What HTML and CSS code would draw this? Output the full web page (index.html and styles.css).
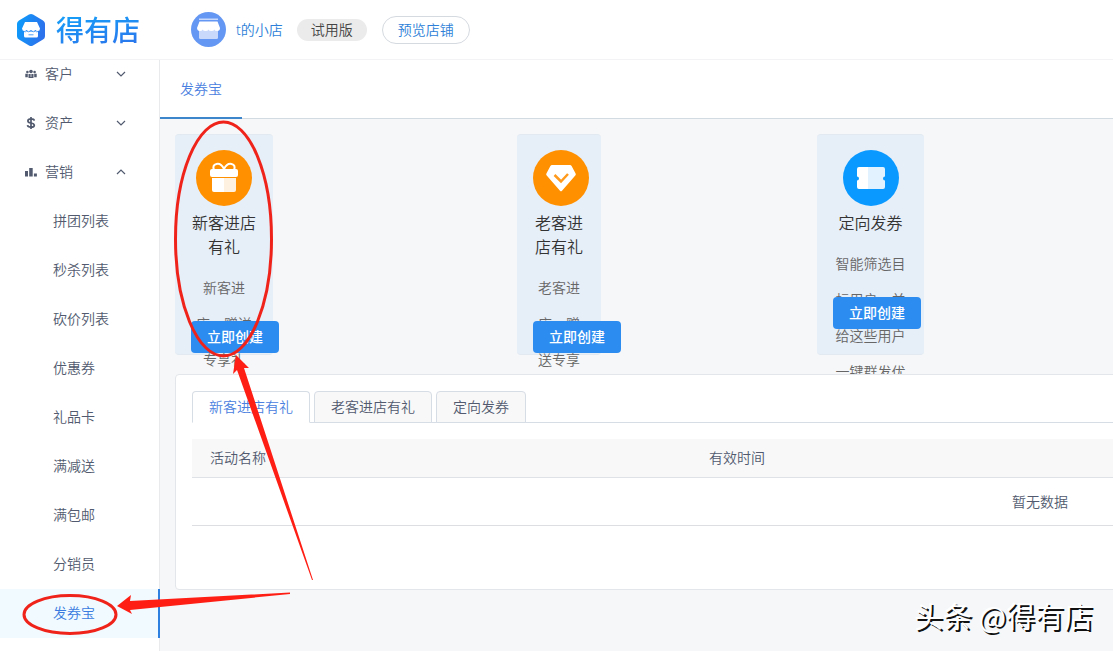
FILE: index.html
```html
<!DOCTYPE html>
<html lang="zh-CN">
<head>
  <meta charset="UTF-8">
  <title>发券宝 - 得有店</title>
  <meta name="viewport" content="width=device-width, initial-scale=1.0">
  <link rel="stylesheet" href="styles.css">
</head>
<body>
  <header class="header">
    <a class="brand" href="#">
      <svg width="30" height="34" viewBox="0 0 30 34">
        <defs>
          <linearGradient id="hex" x1="0" y1="0" x2="1" y2="0.3">
            <stop offset="0" stop-color="#0a9ffb"/>
            <stop offset="1" stop-color="#2c72ec"/>
          </linearGradient>
        </defs>
        <path d="M13 1.600q2-1.200 4 0l10 5.800q2 1.200 2 3.400v12.400q0 2.200-2 3.400l-10 5.800q-2 1.200-4 0l-10-5.800q-2-1.200-2-3.400V10.800q0-2.200 2-3.400z" fill="url(#hex)"/>
        <path d="M9 9h12l3 6.500q0 2.500-2.200 2.500t-2.300-1q-.6 1-2.300 1T15 17q-.6 1-2.300 1t-2.200-1Q10 18 8.200 18T6 15.500z" fill="#fff"/>
        <path d="M8 18h14v5q0 1.500-1.500 1.500h-11Q8 24.500 8 23z" fill="#fff"/>
        <path d="M8 18.500q1.500.8 2.500-.4 2 1.300 4.500 0 2.500 1.300 4.500 0 1 1.200 2.500.4M12.500 21.800h5" stroke="#2388f4" stroke-width=".8" fill="none"/>
      </svg>
      <span class="brand-name">得有店</span>
    </a>
    <div class="shop">
      <svg width="35" height="35" viewBox="0 0 35 35">
        <circle cx="17.500" cy="17.500" r="17.500" fill="#6497f3"/>
        <path d="M8 18h19v7.500q0 1.500-1.500 1.500h-16Q8 27 8 25.500z" fill="#c9d9fb"/>
        <path d="M8 6.500h19V8H8z" fill="#c9d9fb"/>
        <path d="M8.500 9.500h18l2.500 6.500q0 3-2.700 3t-3-1.200q-.6 1.200-2.900 1.200t-2.900-1.200q-.6 1.200-2.900 1.200t-2.900-1.200q-.6 1.200-3 1.200T6 16z" fill="#fff"/>
      </svg>
      <a class="shop-name" href="#">t的小店</a>
      <span class="badge">试用版</span>
      <button class="preview">预览店铺</button>
    </div>
  </header>

  <div class="layout">
    <nav class="sidebar">
      <div class="menu">
        <a class="group" href="#">
          <svg width="12" height="12" viewBox="0 0 12 12" fill="#515a6e"><circle cx="6" cy="3.500" r="1.800"/><circle cx="2.400" cy="4" r="1.300"/><circle cx="9.600" cy="4" r="1.300"/><path d="M3.500 6h5v4h-5zM.3 5.800h2.500v3.500H.3zM9.200 5.800h2.500v3.500H9.200z"/><path d="M6 6v3" stroke="#fff" stroke-width=".7"/></svg>
          <span>客户</span>
          <svg class="caret" width="10" height="10" viewBox="0 0 10 10"><path d="M1 3l4 4 4-4"/></svg>
        </a>
        <a class="group" href="#">
          <svg width="12" height="12" viewBox="0 0 12 12" fill="none" stroke="#515a6e" stroke-width="1.700"><path d="M9.300 3.600Q9 1.900 6 1.900T2.900 3.900Q2.900 5.500 6 6t3.300 2.200q0 2-3.300 2T2.500 8.200M6 0v12"/></svg>
          <span>资产</span>
          <svg class="caret" width="10" height="10" viewBox="0 0 10 10"><path d="M1 3l4 4 4-4"/></svg>
        </a>
        <a class="group" href="#">
          <svg width="12" height="12" viewBox="0 0 12 12" fill="#515a6e"><path d="M0 5h3v5.500H0zM4.200 2h3.500v8.500H4.200zM8.900 7.500h3v3h-3z"/></svg>
          <span>营销</span>
          <svg class="caret" width="10" height="10" viewBox="0 0 10 10"><path d="M1 7l4-4 4 4"/></svg>
        </a>
        <a class="item" href="#">拼团列表</a>
        <a class="item" href="#">秒杀列表</a>
        <a class="item" href="#">砍价列表</a>
        <a class="item" href="#">优惠券</a>
        <a class="item" href="#">礼品卡</a>
        <a class="item" href="#">满减送</a>
        <a class="item" href="#">满包邮</a>
        <a class="item" href="#">分销员</a>
        <a class="item active" href="#">发券宝</a>
      </div>
    </nav>

    <main class="main">
      <div class="topbar">
        <a class="topbar-tab" href="#">发券宝</a>
      </div>

      <div class="cards">
        <section class="card">
          <svg class="card-icon" width="56" height="56" viewBox="0 0 56 56">
            <circle cx="28" cy="28" r="28" fill="#ff9000"/>
            <path d="M28 19q-3-6-7.500-5t-2.500 6M28 19q3-6 7.500-5t2.500 6" fill="none" stroke="#fff" stroke-width="2"/>
            <rect x="14" y="19" width="28" height="8" rx="2" fill="#fff"/>
            <path d="M16 28h12v14H18q-2 0-2-2z" fill="#fff"/>
            <path d="M28 28h12v12q0 2-2 2H28z" fill="#fff1df"/>
          </svg>
          <h2>新客进店有礼</h2>
          <p>新客进店，赠送专享礼</p>
          <button class="create">立即创建</button>
        </section>
        <section class="card card-narrow">
          <svg class="card-icon" width="56" height="56" viewBox="0 0 56 56">
            <circle cx="28" cy="28" r="28" fill="#ff9000"/>
            <path d="M19 15h18q1 0 1.600 1l4 7.500q.6 1-.3 2L29 40.800q-1 1-2 0L13.700 25.500q-.9-1-.3-2l4-7.500q.6-1 1.600-1z" fill="#fff"/>
            <path d="M21.500 25l6.500 6.500 7-7.500" fill="none" stroke="#ff9a1c" stroke-width="2.500"/>
          </svg>
          <h2>老客进店有礼</h2>
          <p>老客进店，赠送专享礼</p>
          <button class="create">立即创建</button>
        </section>
        <section class="card card-wide">
          <svg class="card-icon" width="56" height="56" viewBox="0 0 56 56">
            <circle cx="28" cy="28" r="28" fill="#0a9aff"/>
            <path d="M25 17H16q-2 0-2 2v7.500a2 2 0 0 1 0 4V37q0 2 2 2h9z" fill="#fff"/>
            <path d="M25 17h15q2 0 2 2v7.500a2 2 0 0 0 0 4V37q0 2-2 2H25z" fill="#e2f3ff"/>
          </svg>
          <h2>定向发券</h2>
          <p>智能筛选目标用户，并给这些用户一键群发优惠券</p>
          <button class="create">立即创建</button>
        </section>
      </div>

      <section class="panel">
        <div class="tabs">
          <button class="tab selected">新客进店有礼</button>
          <button class="tab">老客进店有礼</button>
          <button class="tab">定向发券</button>
        </div>
        <table class="table">
          <thead>
            <tr>
              <th class="col-name">活动名称</th>
              <th>有效时间</th>
            </tr>
          </thead>
          <tbody>
            <tr>
              <td colspan="2">暂无数据</td>
            </tr>
          </tbody>
        </table>
      </section>
    </main>
  </div>

  <!-- hand-drawn marks over the page -->
  <svg class="marks" width="330" height="651" viewBox="0 0 330 651">
    <g fill="none" stroke="#f0231a" stroke-width="3">
      <ellipse cx="223.500" cy="239" rx="48" ry="117"/>
      <ellipse cx="70" cy="614.500" rx="46" ry="19"/>
    </g>
    <g fill="#ff1e14">
      <path d="M236 355l13 13-5 0 69 212h-1L237 370l-4 4z"/>
      <path d="M117 606l14-11-1 6 160-8.500v1.500L130 610l2 4z"/>
    </g>
  </svg>
  <div class="watermark">头条 @得有店</div>
</body>
</html>
```
FILE: styles.css
```css
* {
  box-sizing: border-box;
}

body {
  margin: 0;
  min-height: 100vh;
  display: flex;
  flex-direction: column;
  position: relative;
  overflow: hidden;
  background: #f5f7f9;
  color: #515a6e;
  font-family: "Noto Sans", "Noto Sans CJK SC", sans-serif;
  font-size: 14px;
  font-weight: 350;
  line-height: 20px;
}

a {
  color: inherit;
  text-decoration: none;
}

button {
  font: inherit;
  cursor: pointer;
}

/* header */
.header {
  display: flex;
  align-items: center;
  height: 60px;
  padding-left: 16px;
  background: #fff;
  border-bottom: 1px solid #f3f3f5;
  position: relative;
  z-index: 2;
}

.brand {
  display: flex;
  align-items: center;
  gap: 10px;
  width: 175px;
}

.brand-name {
  font-size: 28px;
  font-weight: 500;
  line-height: 40px;
  color: transparent;
  background: linear-gradient(170deg, #12a5fa, #2f70ea);
  background-clip: text;
  -webkit-background-clip: text;
}

.shop {
  display: flex;
  align-items: center;
}

.shop-name {
  margin: 0 14px 0 10px;
  color: #2d7fd8;
}

.badge {
  padding: 0 14px;
  margin-right: 15px;
  border-radius: 11px;
  background: #ebebeb;
  color: #444;
  line-height: 22px;
}

.preview {
  height: 28px;
  padding: 0 15px;
  border: 1px solid #d5dae0;
  border-radius: 14px;
  background: #fff;
  color: #2d7fd8;
}

/* sidebar */
.layout {
  display: flex;
  flex: 1;
}

.sidebar {
  flex: 0 0 160px;
  background: #fff;
  border-right: 1px solid #e8eaec;
}

/* the menu is scrolled a little under the header */
.menu {
  margin: -10px -1px 0 0;
}

.group,
.item {
  display: flex;
  align-items: center;
  height: 49px;
  padding-bottom: 2px;
}

.group {
  gap: 8px;
  padding-left: 25px;
  padding-right: 34px;
}

.caret {
  margin-left: auto;
  fill: none;
  stroke: #515a6e;
  stroke-width: 1.2;
}

.item {
  padding-left: 53px;
}

.item.active {
  background: #f0faff;
  color: #3a7be0;
  border-right: 2px solid #2d7fe0;
}

/* content */
.main {
  flex: 1;
  min-width: 0;
}

.topbar {
  display: flex;
  height: 59px;
  background: #fff;
  border-bottom: 1px solid #d3dbe2;
}

.topbar-tab {
  height: 59px;
  padding: 0 20px;
  border-bottom: 2px solid #3d86cc;
  color: #4a80e0;
  line-height: 58px;
}

.cards {
  display: grid;
  grid-template-columns: 342px 300px 1fr;
  padding: 15px 15px 0;
}

.card {
  width: 98px;
  height: 221px;
  padding: 15px 16px;
  border: 1px solid #e2e9f1;
  border-left: 0;
  border-right: 0;
  border-radius: 4px;
  background: #e6eef8;
  text-align: center;
}

.card-narrow {
  width: 84px;
}

.card-wide {
  width: 107px;
}

.card-icon {
  display: block;
  margin: 0 auto 5px;
}

.card h2 {
  margin: 0 0 11px;
  color: #333;
  font-size: 16px;
  font-weight: 350;
  line-height: 24px;
}

.card p {
  height: 36px;
  margin: 0 0 15px;
  color: #666;
  line-height: 36px;
}

.create {
  position: relative;
  display: block;
  width: 88px;
  height: 32px;
  padding: 0;
  border: 0;
  border-radius: 4px;
  background: #2d8cf0;
  color: #fff;
  font-weight: 500;
}

/* wide list, runs off the right edge on smaller windows */
.panel {
  position: relative;
  min-width: 1730px;
  min-height: 216px;
  margin: 19px 15px 0;
  padding: 16px;
  border: 1px solid #e3e6ea;
  border-radius: 4px;
  background: #fff;
}

.tabs {
  display: flex;
  gap: 4px;
  margin-bottom: 16px;
  border-bottom: 1px solid #d7dde4;
}

.tab {
  height: 32px;
  margin-bottom: -1px;
  padding: 0 16px;
  border: 1px solid #d7dde4;
  border-radius: 4px 4px 0 0;
  background: #f8f8f9;
  color: #515a6e;
}

.tab.selected {
  border-bottom-color: #fff;
  background: #fff;
  color: #4a80e0;
}

.table {
  width: 100%;
  table-layout: fixed;
  border-spacing: 0;
}

.table th {
  height: 39px;
  padding: 0 18px;
  border-bottom: 1px solid #dfe3e8;
  background: #f8f8f9;
  font-weight: 350;
  text-align: left;
}

.table .col-name {
  width: 499px;
}

.table td {
  height: 48px;
  padding: 0;
  border-bottom: 1px solid #dcdee2;
  text-align: center;
}

/* overlays */
.marks {
  position: absolute;
  top: 0;
  left: 0;
  z-index: 3;
  pointer-events: none;
}

.watermark {
  position: absolute;
  right: 20px;
  bottom: 16px;
  z-index: 3;
  color: #fff;
  font-family: "Noto Sans CJK SC", sans-serif;
  font-size: 29px;
  font-weight: 400;
  line-height: 40px;
  text-shadow: 2px 2px 0 #111;
}
```
